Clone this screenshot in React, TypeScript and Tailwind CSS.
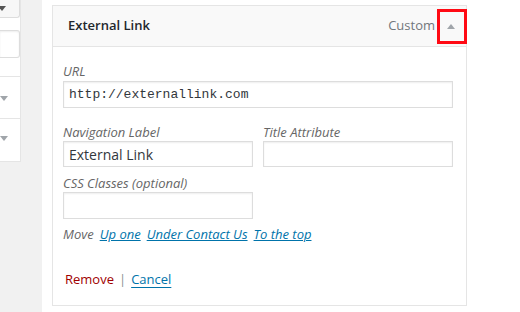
import React from "react";

function Tri({ color, down }: { color: string; down?: boolean }) {
  return (
    <svg width="8" height="5" viewBox="0 0 8 5" className="block">
      {down ? <path d="M0 0 L8 0 L4 5 Z" fill={color} /> : <path d="M0 5 L8 5 L4 0 Z" fill={color} />}
    </svg>
  );
}

export default function App() {
  return (
    <div className="w-[520px] h-[312px] flex bg-white overflow-hidden font-['Open_Sans',sans-serif] text-[13px]">
      {/* left column */}
      <div className="w-[42px] h-full bg-[#f1f1f1] shrink-0">
        <div className="w-[21px] h-[162px] bg-white border-r border-b border-[#e5e5e5] flex flex-col">
          <div className="h-[18px] bg-[#f7f7f7] border-b border-r border-[#dddddd] rounded-br-[3px] flex items-center">
            <div className="-ml-[2px]">
              <Tri color="#555555" down />
            </div>
          </div>
          <div className="mt-[12px] h-[28px] border border-l-0 border-[#dddddd] rounded-r-[3px] bg-white shadow-[inset_0_1px_2px_rgba(0,0,0,0.07)]" />
          <div className="mt-[18px] border-t border-[#e5e5e5] h-[42px] flex items-center pl-[0px]">
            <div className="mt-[2px]">
              <Tri color="#a0a5aa" down />
            </div>
          </div>
          <div className="border-t border-[#e5e5e5] h-[42px] flex items-center">
            <div className="-mt-[2px]">
              <Tri color="#a0a5aa" down />
            </div>
          </div>
        </div>
      </div>

      {/* main */}
      <div className="flex-1 pl-[10px] pt-[5px]">
        <div className="w-[415px] border border-[#e5e5e5] bg-white relative">
          <div className="h-[41px] bg-[#f9f9f9] border-b border-[#e5e5e5] flex items-center pl-[15px] pr-[11px]">
            <span className="font-semibold text-[13px] text-[#23282d]">External Link</span>
            <span className="ml-auto text-[13px] text-[#72777c]">Custom</span>
            <span className="ml-[12px]">
              <Tri color="#a0a5aa" />
            </span>
          </div>
          {/* red annotation */}
          <div className="absolute left-[384px] top-[3px] w-[30px] h-[35px] border-[3px] border-[#ff0a14]" />

          <div className="pt-[15px] pl-[10px] pb-[17px]">
            <div className="h-[19px] leading-[18px] italic text-[#666666]">URL</div>
            <div className="w-[390px] h-[27px] border border-[#dddddd] shadow-[inset_0_1px_2px_rgba(0,0,0,0.07)] flex items-center pl-[5px] font-['Liberation_Mono',monospace] text-[13px] text-[#32373c]">
              http://externallink.com
            </div>

            <div className="mt-[15px] flex gap-[10px]">
              <div className="w-[190px]">
                <div className="h-[18px] leading-[18px] italic text-[#666666]">Navigation Label</div>
                <div className="h-[26px] border border-[#dddddd] shadow-[inset_0_1px_2px_rgba(0,0,0,0.07)] flex items-center pl-[5px] text-[14px] text-[#32373c]">
                  External Link
                </div>
              </div>
              <div className="w-[190px]">
                <div className="h-[18px] leading-[18px] italic text-[#666666]">Title Attribute</div>
                <div className="h-[26px] border border-[#dddddd] shadow-[inset_0_1px_2px_rgba(0,0,0,0.07)]" />
              </div>
            </div>

            <div className="mt-[7px] w-[190px]">
              <div className="h-[18px] leading-[18px] italic text-[#666666]">CSS Classes (optional)</div>
              <div className="h-[27px] border border-[#dddddd] shadow-[inset_0_1px_2px_rgba(0,0,0,0.07)]" />
            </div>

            <div className="mt-[6px] h-[18px] leading-[18px] flex gap-[6px] italic">
              <span className="text-[#666666]">Move</span>
              <span className="text-[#0073aa] underline">Up one</span>
              <span className="text-[#0073aa] underline">Under Contact Us</span>
              <span className="text-[#0073aa] underline">To the top</span>
            </div>

            <div className="mt-[27px] h-[18px] leading-[18px] flex gap-[5px] pl-[2px]">
              <span className="text-[#a00000]">Remove</span>
              <span className="text-[#8c8f94]">|</span>
              <span className="text-[#0073aa] underline underline-offset-[3px]">Cancel</span>
            </div>
          </div>
        </div>
      </div>
    </div>
  );
}
